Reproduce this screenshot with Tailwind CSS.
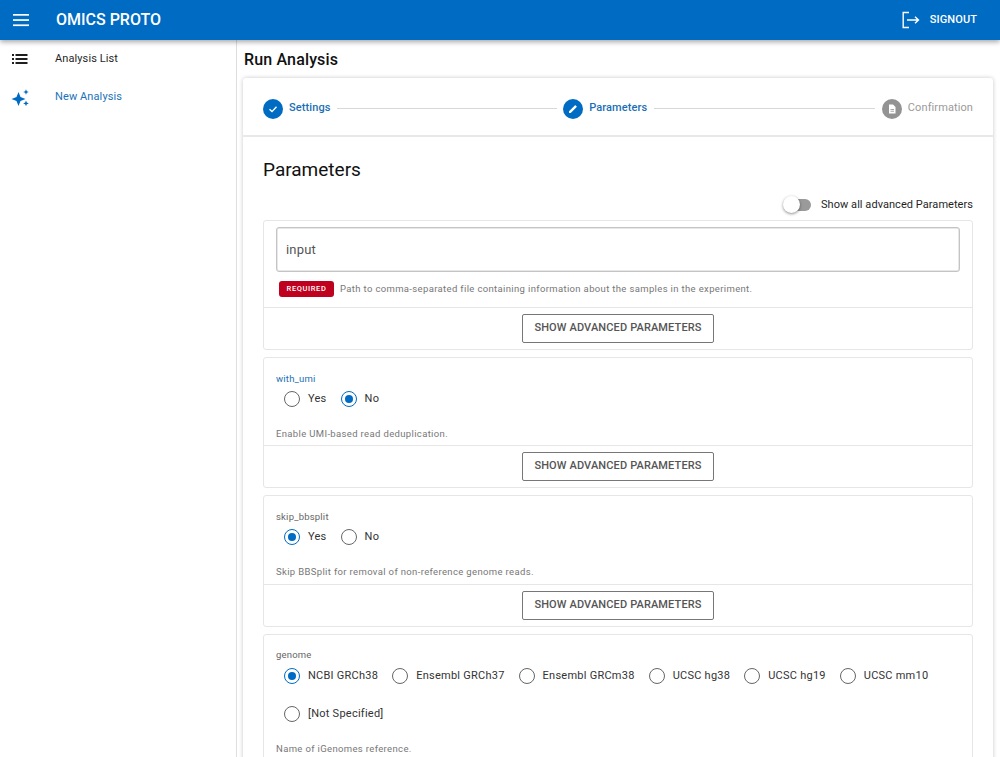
<!DOCTYPE html>
<html lang="en">
<head>
  <meta charset="UTF-8">
  <title>Omics Proto - Run Analysis</title>
  <script src="https://cdn.jsdelivr.net/npm/@tailwindcss/browser@4"></script>
</head>
<body class="h-[757px] overflow-hidden bg-white font-['Roboto',sans-serif] text-[#1f1f1f]">
  <!-- Top bar -->
  <header class="relative z-10 flex h-10 items-center justify-between bg-[#006bc3] pr-[23px] pl-[13px] text-white shadow-[0_2px_5px_rgba(0,0,0,0.35)]">
    <div class="flex items-center">
      <svg class="h-4 w-4" viewBox="0 0 16 16" fill="white"><rect y="2" width="16" height="1.7"/><rect y="7.2" width="16" height="1.7"/><rect y="12.4" width="16" height="1.7"/></svg>
      <span class="ml-[27px] text-[16px] font-medium">OMICS PROTO</span>
    </div>
    <div class="flex items-center">
      <svg class="h-[18px] w-[18px]" viewBox="0 0 18 18" fill="none" stroke="white" stroke-width="1.4"><path d="M7 1.500H1.200v15H7"/><path d="M5 9h11.500M13 5.700 16.500 9 13 12.300"/></svg>
      <span class="ml-[10px] text-[11px] font-medium tracking-[0.1px]">SIGNOUT</span>
    </div>
  </header>

  <div class="flex h-[717px]">
    <!-- Side nav -->
    <nav class="w-[237px] shrink-0 border-r border-[#dedede] text-[11px] tracking-[0.1px]">
      <div class="flex h-[37px] items-center pl-[12px]">
        <svg class="h-[16px] w-[16px]" viewBox="0 0 16 16" fill="#1f1f1f"><rect y="3" width="2" height="2"/><rect y="7" width="2" height="2"/><rect y="11" width="2" height="2"/><rect x="3.500" y="3" width="12" height="2"/><rect x="3.500" y="7" width="12" height="2"/><rect x="3.500" y="11" width="12" height="2"/></svg>
        <span class="mt-[2px] ml-[27px]">Analysis List</span>
      </div>
      <div class="flex h-[40px] items-center pl-[11px] text-[#1a73b8]">
        <svg class="h-[19px] w-[19px]" viewBox="0 0 19 19" fill="#006bc3"><path d="M7.500 4 9.500 9l5 2-5 2-2 5-2-5-5-2 5-2z"/><path d="M15 1.200l.8 2 2 .8-2 .8-.8 2-.8-2-2-.8 2-.8z"/><path d="M15 12.500l.8 2.100 2 .8-2 .8-.8 2.100-.8-2.100-2-.8 2-.8z"/></svg>
        <span class="ml-[25px]">New Analysis</span>
      </div>
    </nav>

    <main class="min-w-0 flex-1 pr-[7px] pl-[6px]">
      <h1 class="flex h-[38px] items-center pt-[2px] pl-px text-[16px] font-medium tracking-[0.15px] text-[#111]">Run Analysis</h1>

      <div class="rounded-[3px] bg-white shadow-[0_0_4px_rgba(0,0,0,0.22)]">
        <!-- Stepper -->
        <div class="flex h-[59px] items-center border-b-2 border-[#e8e8e8] px-5 pt-[4px] text-[11px] tracking-[0.1px]">
          <span class="flex h-5 w-5 items-center justify-center rounded-full bg-[#006bc3]">
            <svg class="h-3 w-3" viewBox="0 0 12 12" fill="none" stroke="white" stroke-width="1.4"><path d="M2.500 6.200 5 8.600 9.500 3.700"/></svg>
          </span>
          <span class="ml-[6px] font-medium text-[#1a6fb5]">Settings</span>
          <span class="mx-[6px] h-px flex-1 bg-[#d8d8d8]"></span>
          <span class="flex h-5 w-5 items-center justify-center rounded-full bg-[#006bc3]">
            <svg class="h-3 w-3" viewBox="0 0 12 12" fill="white"><path d="M2 8.300 7.800 2.500a.7.7 0 0 1 1 0l.7.7a.7.7 0 0 1 0 1L3.700 10H2z"/></svg>
          </span>
          <span class="ml-[6px] font-medium text-[#1a6fb5]">Parameters</span>
          <span class="mx-[7px] h-px flex-1 bg-[#d8d8d8]"></span>
          <span class="flex h-5 w-5 items-center justify-center rounded-full bg-[#939393]">
            <svg class="h-3 w-3" viewBox="0 0 12 12" fill="white"><path d="M3 1.500h4L9.500 4v6.500H3z"/><rect x="4.500" y="6" width="3.500" height="0.800" fill="#939393"/><rect x="4.500" y="7.800" width="3.500" height="0.800" fill="#939393"/></svg>
          </span>
          <span class="ml-[6px] text-[#9a9a9a]">Confirmation</span>
        </div>

        <div class="px-5">
          <h2 class="flex h-[59px] items-center pt-[7px] text-[19px] text-[#111]">Parameters</h2>

          <!-- Advanced toggle -->
          <div class="flex h-[18px] items-center justify-end text-[11px] tracking-[0.05px]">
            <span class="relative mr-[10px] h-[18px] w-[28px]">
              <span class="absolute top-[3px] left-[2px] h-[12px] w-[26px] rounded-full bg-[#9a9a9a]"></span>
              <span class="absolute top-0 left-0 h-[17px] w-[17px] rounded-full bg-white shadow-[0_1px_3px_rgba(0,0,0,0.45)]"></span>
            </span>
            Show all advanced Parameters
          </div>

          <div class="mt-[6px] flex flex-col gap-[7px]">
            <!-- input -->
            <section class="rounded-[3px] border border-[#e6e6e6]">
              <div class="h-[86px] px-[12px] pt-[6px]">
                <div class="flex h-[45px] items-center rounded-[3px] border border-[#c4c4c4] px-[9px] text-[13px] tracking-[0.2px] text-[#555] shadow-[inset_0_0_0_0.5px_#d0d0d0]">input</div>
                <div class="mt-[9px] flex items-center pl-[3px]">
                  <span class="flex h-[16px] w-[55px] items-center justify-center rounded-[3px] bg-[#c0001f] text-[7.500px] font-medium tracking-[0.6px] text-white">REQUIRED</span>
                  <span class="ml-[6px] text-[9.500px] tracking-[0.35px] text-[#777]">Path to comma-separated file containing information about the samples in the experiment.</span>
                </div>
              </div>
              <div class="flex h-[42px] items-center justify-center border-t border-[#e6e6e6]">
                <button class="h-[29px] w-[192px] rounded-[2px] border border-[#777] text-[11px] font-medium tracking-[0.13px] text-[#555]">SHOW ADVANCED PARAMETERS</button>
              </div>
            </section>

            <!-- with_umi -->
            <section class="rounded-[3px] border border-[#e6e6e6]">
              <div class="h-[87px] px-[12px] pt-[15px]">
                <div class="h-3 text-[9.500px] leading-3 tracking-[0.2px] text-[#1a6fb5]">with_umi</div>
                <div class="mt-[3px] flex h-[22px] items-center pl-[8px] text-[11px] tracking-[0.25px] text-[#333]">
                  <span class="h-4 w-4 rounded-full border-[1.500px] border-[#666]"></span><span class="ml-2">Yes</span>
                  <span class="ml-[14px] flex h-4 w-4 items-center justify-center rounded-full border-[1.500px] border-[#006bc3]"><span class="h-2 w-2 rounded-full bg-[#006bc3]"></span></span><span class="ml-2">No</span>
                </div>
                <div class="mt-[18px] text-[9.500px] leading-3 tracking-[0.35px] text-[#777]">Enable UMI-based read deduplication.</div>
              </div>
              <div class="flex h-[42px] items-center justify-center border-t border-[#e6e6e6]">
                <button class="h-[29px] w-[192px] rounded-[2px] border border-[#777] text-[11px] font-medium tracking-[0.13px] text-[#555]">SHOW ADVANCED PARAMETERS</button>
              </div>
            </section>

            <!-- skip_bbsplit -->
            <section class="rounded-[3px] border border-[#e6e6e6]">
              <div class="h-[88px] px-[12px] pt-[15px]">
                <div class="h-3 text-[9.500px] leading-3 tracking-[0.2px] text-[#666]">skip_bbsplit</div>
                <div class="mt-[3px] flex h-[22px] items-center pl-[8px] text-[11px] tracking-[0.25px] text-[#333]">
                  <span class="flex h-4 w-4 items-center justify-center rounded-full border-[1.500px] border-[#006bc3]"><span class="h-2 w-2 rounded-full bg-[#006bc3]"></span></span><span class="ml-2">Yes</span>
                  <span class="ml-[14px] h-4 w-4 rounded-full border-[1.500px] border-[#666]"></span><span class="ml-2">No</span>
                </div>
                <div class="mt-[18px] text-[9.500px] leading-3 tracking-[0.35px] text-[#777]">Skip BBSplit for removal of non-reference genome reads.</div>
              </div>
              <div class="flex h-[42px] items-center justify-center border-t border-[#e6e6e6]">
                <button class="h-[29px] w-[192px] rounded-[2px] border border-[#777] text-[11px] font-medium tracking-[0.13px] text-[#555]">SHOW ADVANCED PARAMETERS</button>
              </div>
            </section>

            <!-- genome -->
            <section class="rounded-[3px] border border-[#e6e6e6]">
              <div class="h-[130px] px-[12px] pt-[14px]">
                <div class="h-3 text-[9.500px] leading-3 tracking-[0.2px] text-[#666]">genome</div>
                <div class="mt-[4px] flex h-[22px] items-center pl-[8px] text-[11px] tracking-[0.25px] text-[#333]">
                  <span class="flex h-4 w-4 items-center justify-center rounded-full border-[1.500px] border-[#006bc3]"><span class="h-2 w-2 rounded-full bg-[#006bc3]"></span></span><span class="ml-2">NCBI GRCh38</span>
                  <span class="ml-[14px] h-4 w-4 rounded-full border-[1.500px] border-[#666]"></span><span class="ml-2">Ensembl GRCh37</span>
                  <span class="ml-[14px] h-4 w-4 rounded-full border-[1.500px] border-[#666]"></span><span class="ml-2">Ensembl GRCm38</span>
                  <span class="ml-[14px] h-4 w-4 rounded-full border-[1.500px] border-[#666]"></span><span class="ml-2">UCSC hg38</span>
                  <span class="ml-[14px] h-4 w-4 rounded-full border-[1.500px] border-[#666]"></span><span class="ml-2">UCSC hg19</span>
                  <span class="ml-[14px] h-4 w-4 rounded-full border-[1.500px] border-[#666]"></span><span class="ml-2">UCSC mm10</span>
                </div>
                <div class="mt-[16px] flex h-[22px] items-center pl-[8px] text-[11px] tracking-[0.25px] text-[#333]">
                  <span class="h-4 w-4 rounded-full border-[1.500px] border-[#666]"></span><span class="ml-2">[Not Specified]</span>
                </div>
                <div class="mt-[18px] text-[9.500px] leading-3 tracking-[0.35px] text-[#777]">Name of iGenomes reference.</div>
              </div>
            </section>
          </div>
        </div>
      </div>
    </main>
  </div>
</body>
</html>
